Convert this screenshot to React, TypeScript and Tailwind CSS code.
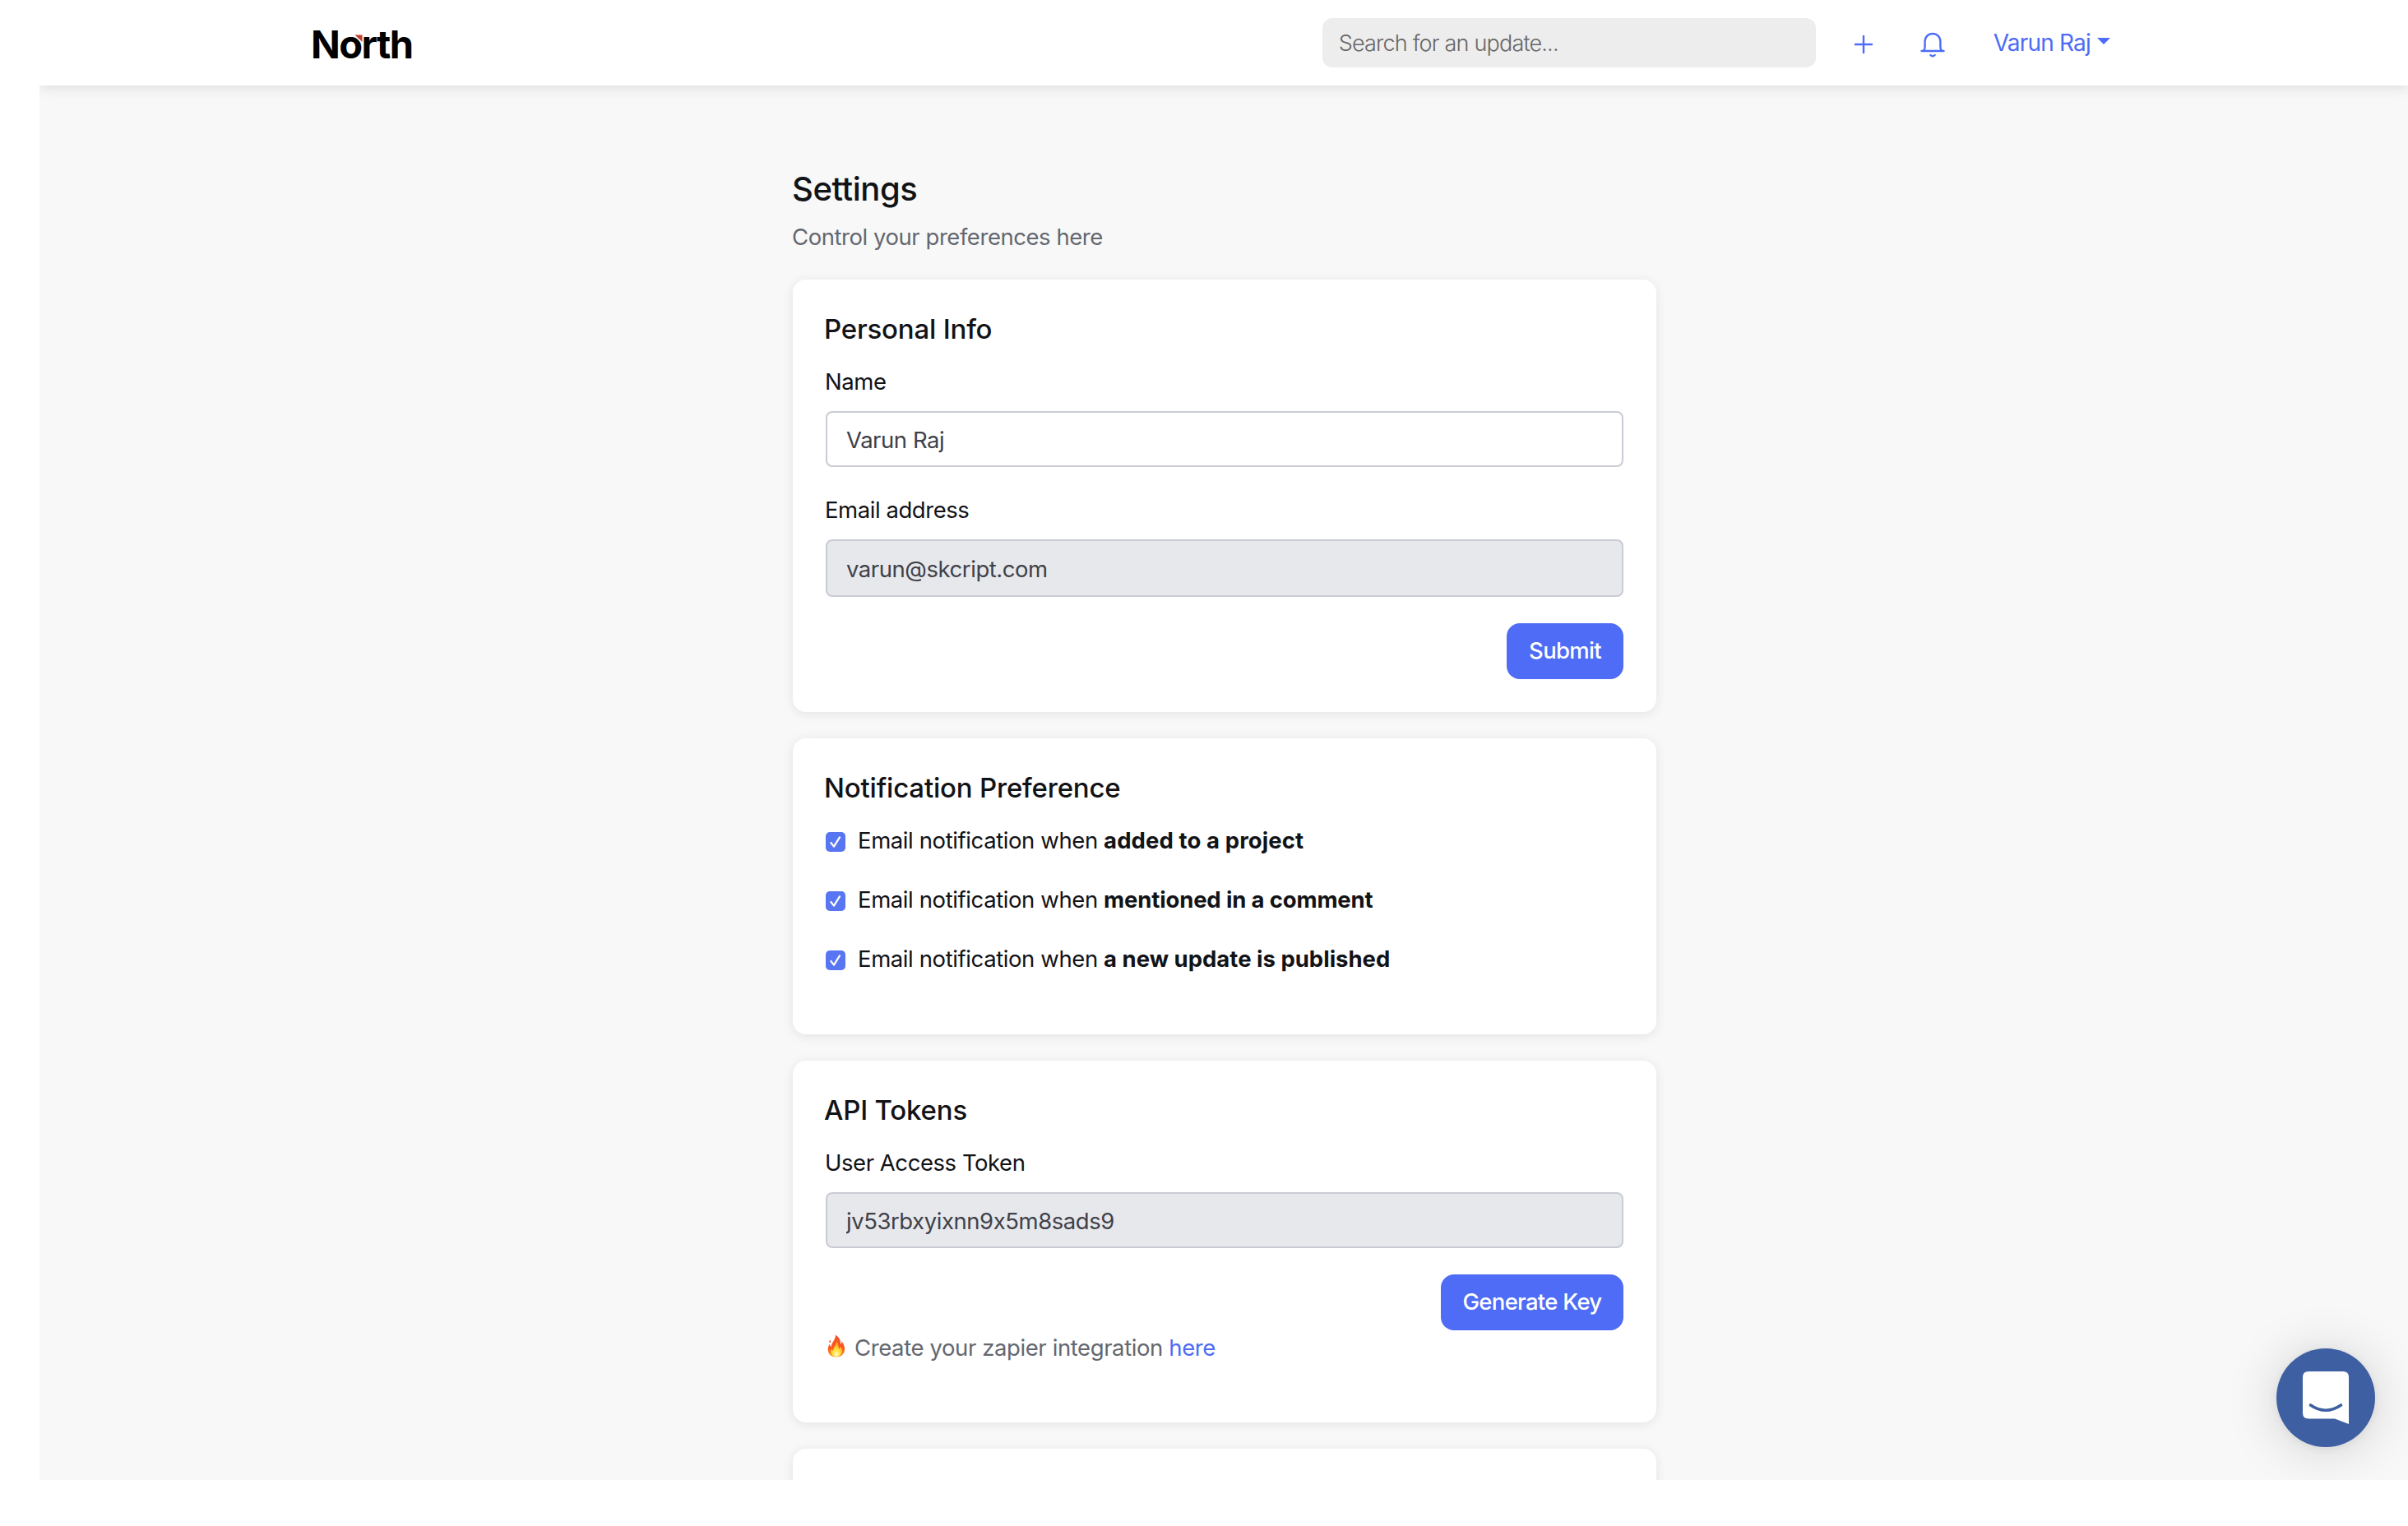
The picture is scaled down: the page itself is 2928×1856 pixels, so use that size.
import type { ReactNode } from 'react'

const preferences = [
  { id: 'project', text: 'added to a project', spacing: 'tracking-[0.1px]' },
  { id: 'mention', text: 'mentioned in a comment', spacing: 'tracking-[-0.15px]' },
  { id: 'publish', text: 'a new update is published', spacing: 'tracking-[0px]' },
]

function BellIcon() {
  return (
    <svg className="w-8 h-8" viewBox="0 0 32 32" fill="none" stroke="currentColor" strokeWidth="2.4" strokeLinecap="round">
      <path d="M2.5 24H29.5" />
      <path d="M5.2 23.6C6.4 22.2 6.6 20.6 6.6 18.5V12.6C6.6 7 10.6 3 16 3S25.400 7 25.400 12.600V18.500C25.400 20.600 25.600 22.200 26.800 23.600" />
      <path d="M13.4 29Q16 31.800 18.600 29" />
    </svg>
  )
}

function FireIcon() {
  return (
    <svg className="w-[22px] h-[28px]" viewBox="0 0 22 28">
      <defs>
        <linearGradient id="flame" x1="0" y1="0" x2="0" y2="1">
          <stop offset="0" stopColor="#f4502a" />
          <stop offset="0.6" stopColor="#fb5a1e" />
          <stop offset="1" stopColor="#ff9b1a" />
        </linearGradient>
        <radialGradient id="core" cx="0.5" cy="0.85" r="0.7">
          <stop offset="0" stopColor="#fffbd0" />
          <stop offset="0.45" stopColor="#ffe03a" />
          <stop offset="1" stopColor="#ffa424" />
        </radialGradient>
      </defs>
      <path
        d="M10.2 0.5C14.5 3.5 16.4 7 16 12C17 11.2 17.4 10 17.3 8.6C20 11.5 21.5 15 21 19C20.4 24.4 16.4 27.5 11 27.5S1.2 24.5 0.8 19.5C0.5 16 1.6 13.5 3 11.5C3.2 13.4 3.8 14.6 4.7 15.3C4.5 10.5 9.5 7.5 10.2 0.5Z"
        fill="url(#flame)"
      />
      <path d="M3.4 6.6L4.2 9L3 10.6L2.2 8.5Z" fill="#f4502a" />
      <path
        d="M11.5 8C13.5 12 13 15 14.5 17.2C15.6 16.6 16 15.6 16 14.5C18 18 18.5 20.5 16.8 23.5C15.5 26 13.5 27 11 27S6 26 4.8 23.5C3.8 21.5 4 19.5 5 17.5C5.6 18.8 6.3 19.4 7.2 19.7C7 15.5 11 13 11.5 8Z"
        fill="url(#core)"
      />
    </svg>
  )
}

function Logo() {
  return (
    <a href="#" className="relative block mt-[3px] text-black text-[47px] leading-[60px] font-bold tracking-[-1.6px]">
      North
      <svg className="absolute left-[51px] top-[18px] w-3.5 h-3.5" viewBox="0 0 14 14">
        <path d="M0 0H13V13Z" fill="#fff" />
        <path d="M2.5 0.5H11.5V9Z" fill="#c5402a" />
      </svg>
    </a>
  )
}

function Header() {
  return (
    <header className="relative h-[104px] shrink-0 bg-white shadow-[0_2px_16px_rgba(0,0,0,0.12)]">
      <div className="flex items-center h-full pl-[330px] pr-[362px] text-[#4e6cf5]">
        <Logo />
        <input
          className="ml-auto w-[600px] h-[60px] rounded-xl bg-[#ededed] px-5 text-[27px] font-[350] placeholder:text-[#666] tracking-[-0.8px]"
          placeholder="Search for an update..."
        />
        <button className="ml-[46px] mt-[3px]">
          <svg className="w-6 h-6" viewBox="0 0 24 24" stroke="currentColor" strokeWidth="2.4" strokeLinecap="round">
            <path d="M12 2V22M2 12H22" />
          </svg>
        </button>
        <button className="ml-14 mt-1">
          <BellIcon />
        </button>
        <button className="ml-[58px] flex items-center gap-2 text-[28px] leading-[42px] tracking-[-0.8px]">
          <span className="whitespace-nowrap">Varun Raj</span>
          <svg className="w-4 h-2 -mt-1" viewBox="0 0 16 8" fill="currentColor">
            <path d="M0 0H16L8 8Z" />
          </svg>
        </button>
      </div>
    </header>
  )
}

function Card({ title, className, children }: { title?: string; className: string; children?: ReactNode }) {
  return (
    <section className={`shrink-0 rounded-2xl bg-white p-10 shadow-[0_2px_14px_rgba(0,0,0,0.09)] ${className}`}>
      {title && <h2 className="-ml-0.5 text-[33px] leading-10 font-medium tracking-[-0.2px]">{title}</h2>}
      {children}
    </section>
  )
}

function Field({ label, value, disabled, className }: { label: string; value: string; disabled?: boolean; className?: string }) {
  return (
    <label className={`block ${className ?? ''}`}>
      <span className="block -ml-px pt-px mb-[15px] leading-[42px]">{label}</span>
      <input
        className={`block w-full rounded-lg border-2 border-[#c9ccd4] px-[23px] pt-px text-[#3f4149] ${disabled ? 'bg-[#e7e8ec]' : 'bg-white'} ${label === 'Email address' ? 'h-[70px]' : 'h-[68px]'}`}
        defaultValue={value}
        disabled={disabled}
      />
    </label>
  )
}

function PrimaryButton({ className, children }: { className: string; children: ReactNode }) {
  return (
    <button className={`h-[68px] rounded-2xl bg-[#4e6cf5] text-white font-medium tracking-[-0.7px] ${className}`}>
      {children}
    </button>
  )
}

export default function App() {
  return (
    <div className="h-[1856px] w-[2928px] bg-white pl-12 font-[Inter,sans-serif] text-[27.5px] tracking-[-0.45px] text-[#121317]">
      <div className="relative flex flex-col h-[1800px] overflow-hidden bg-[#f8f8f8]">
        <Header />

        <main className="flex flex-col w-[1050px] ml-[916px] pt-[102px]">
          <h1 className="-ml-px text-[40px] leading-[48px] font-medium tracking-[-0.45px]">Settings</h1>
          <p className="-ml-px mt-[13px] mb-[31px] leading-[42px] text-[#646870]">Control your preferences here</p>

          <div className="flex flex-col gap-8">
            <Card title="Personal Info" className="h-[526px]">
              <Field label="Name" value="Varun Raj" className="mt-[22px]" />
              <Field label="Email address" value="varun@skcript.com" disabled className="mt-[30px]" />
              <div className="mt-8 flex justify-end">
                <PrimaryButton className="w-[142px]">Submit</PrimaryButton>
              </div>
            </Card>

            <Card title="Notification Preference" className="h-[360px]">
              <ul className="mt-[23px] flex flex-col gap-[30px]">
                {preferences.map((item) => (
                  <li key={item.id} className="flex items-center gap-[15px] leading-[42px]">
                    <span className="mt-1 flex items-center justify-center w-6 h-6 rounded-[5px] bg-[#5876f2]">
                      <svg className="w-4 h-4" viewBox="0 0 16 16" fill="none" stroke="#fff" strokeWidth="2.2" strokeLinecap="round" strokeLinejoin="round">
                        <path d="M2.4 9L6 13.6L13 2.4" />
                      </svg>
                    </span>
                    <p className="whitespace-nowrap tracking-[-0.4px]">
                      Email notification when <b className={`font-bold ${item.spacing}`}>{item.text}</b>
                    </p>
                  </li>
                ))}
              </ul>
            </Card>

            <Card title="API Tokens" className="h-[440px]">
              <Field label="User Access Token" value="jv53rbxyixnn9x5m8sads9" disabled className="mt-[22px]" />
              <div className="mt-8 flex justify-end">
                <PrimaryButton className="w-[222px]">Generate Key</PrimaryButton>
              </div>
              <p className="flex items-center leading-[42px] text-[#646870] tracking-[-0.4px]">
                <span className="ml-0.5 mr-[11px] -mt-1">
                  <FireIcon />
                </span>
                Create your zapier integration&nbsp;
                <a href="#" className="text-[#4e6cf5]">here</a>
              </p>
            </Card>

            <Card className="h-[300px]" />
          </div>
        </main>

        {/* Messenger launcher */}
        <button className="absolute right-10 bottom-10 flex items-center justify-center w-[120px] h-[120px] rounded-full bg-[#3e60a2] shadow-[0_2px_12px_rgba(0,0,0,0.06),0_4px_64px_rgba(0,0,0,0.16)]">
          <svg className="w-14 h-16" viewBox="0 0 56 64" fill="none">
            <path d="M7 0H49Q56 0 56 7V64L39 57.5H7Q0 57.5 0 50.5V7Q0 0 7 0Z" fill="#fff" />
            <path d="M9.500 41Q28 53.500 46.500 41" stroke="#3e60a2" strokeWidth="3.600" strokeLinecap="round" />
          </svg>
        </button>
      </div>
    </div>
  )
}
